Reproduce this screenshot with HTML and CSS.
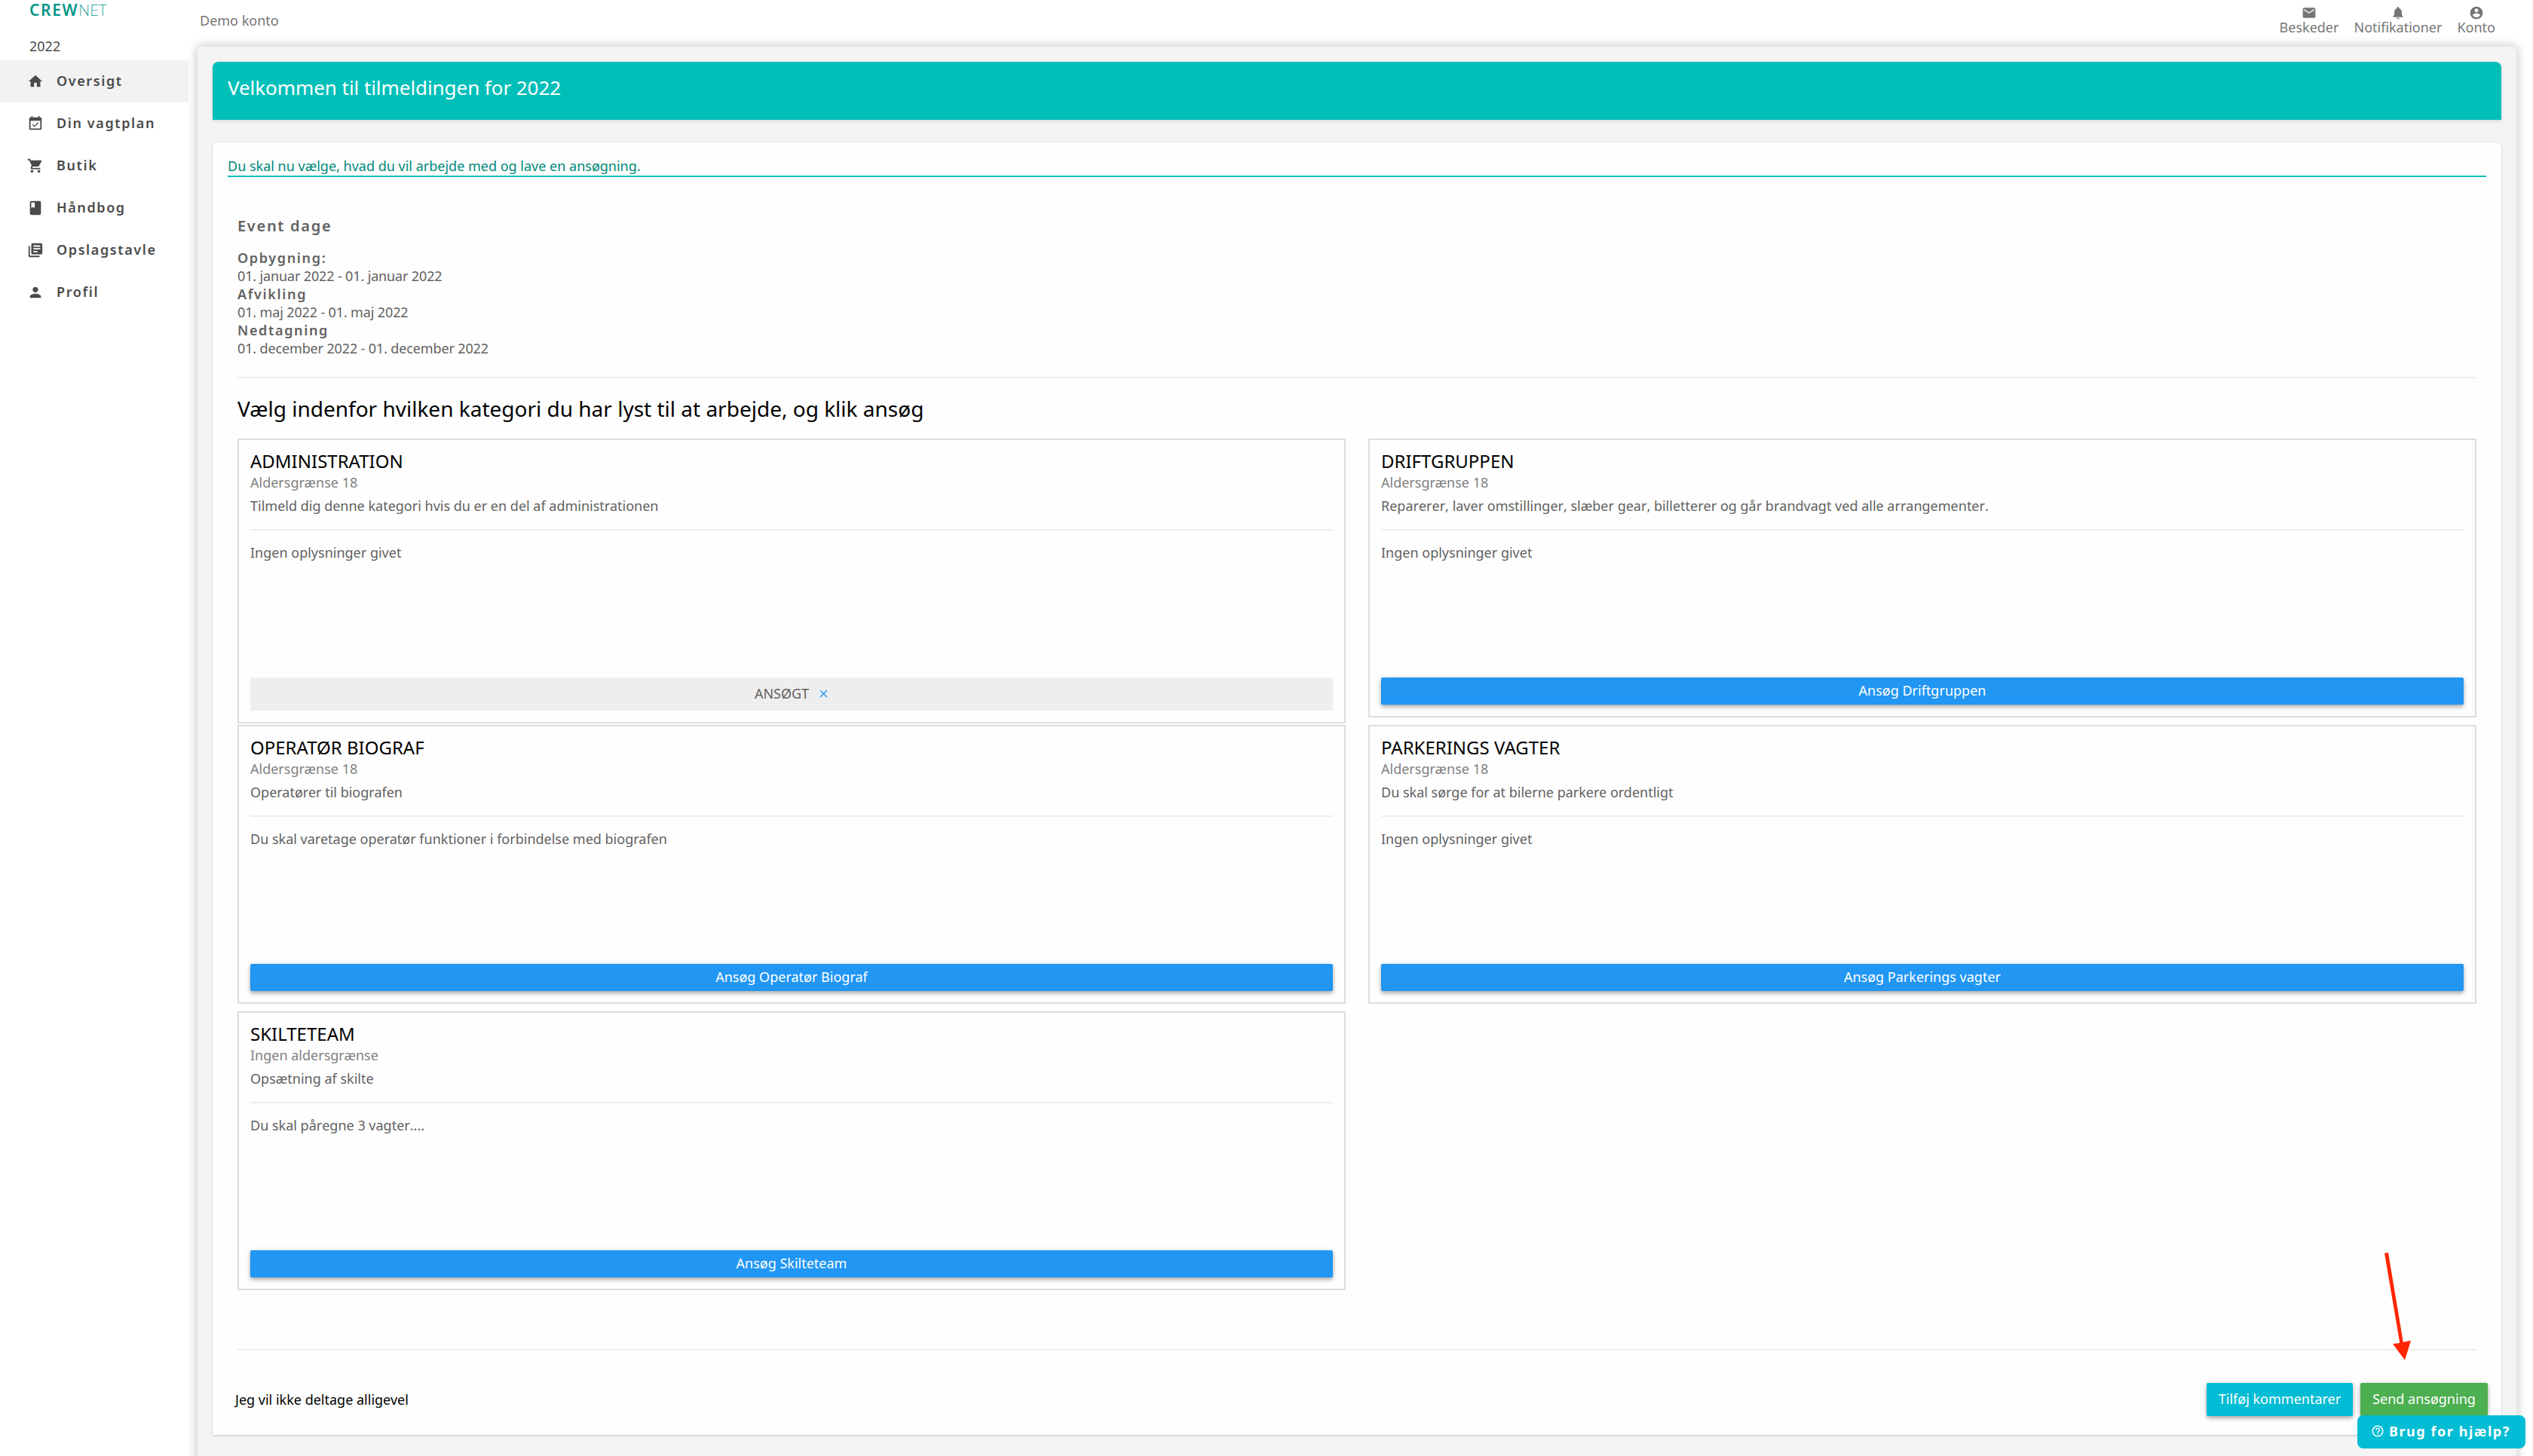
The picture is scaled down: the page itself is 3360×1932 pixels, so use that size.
FILE: index.html
```
<!DOCTYPE html>
<html lang="da">
    <head>
        <meta charset="utf-8">
        <title>CrewNet - Oversigt</title>
        <link rel="stylesheet" href="styles.css">
    </head>
    <body>
        <aside class="sidebar">
            <div class="logo"><b>CREW</b>NET</div>
            <div class="year">2022</div>
            <nav>
                <a class="nav-item active"><svg viewBox="0 0 24 24"><path d="M10 20v-6h4v6h5v-8h3L12 3 2 12h3v8z"/></svg>Oversigt</a>
                <a class="nav-item"><svg viewBox="0 0 24 24"><path d="M16.53 11.06L15.47 10l-4.88 4.88-2.12-2.12-1.06 1.06L10.59 17l5.94-5.94zM19 3h-1V1h-2v2H8V1H6v2H5c-1.11 0-1.99.9-1.99 2L3 19c0 1.1.89 2 2 2h14c1.1 0 2-.9 2-2V5c0-1.1-.9-2-2-2zm0 16H5V8h14v11z"/></svg>Din vagtplan</a>
                <a class="nav-item"><svg viewBox="0 0 24 24"><path d="M7 18c-1.1 0-1.99.9-1.99 2S5.9 22 7 22s2-.9 2-2-.9-2-2-2zM1 2v2h2l3.6 7.59-1.35 2.45c-.16.28-.25.61-.25.96 0 1.1.9 2 2 2h12v-2H7.42c-.14 0-.25-.11-.25-.25l.03-.12.9-1.63h7.45c.75 0 1.41-.41 1.75-1.03l3.58-6.49c.08-.14.12-.31.12-.48 0-.55-.45-1-1-1H5.21l-.94-2H1zm16 16c-1.1 0-1.99.9-1.99 2s.89 2 1.99 2 2-.9 2-2-.9-2-2-2z"/></svg>Butik</a>
                <a class="nav-item"><svg viewBox="0 0 24 24"><path d="M18 2H6c-1.1 0-2 .9-2 2v16c0 1.1.9 2 2 2h12c1.1 0 2-.9 2-2V4c0-1.1-.9-2-2-2zM6 4h5v8l-2.5-1.5L6 12V4z"/></svg>Håndbog</a>
                <a class="nav-item"><svg viewBox="0 0 24 24"><path d="M4 6H2v14c0 1.1.9 2 2 2h14v-2H4V6zm16-4H8c-1.1 0-2 .9-2 2v12c0 1.1.9 2 2 2h12c1.1 0 2-.9 2-2V4c0-1.1-.9-2-2-2zm-1 9H9V9h10v2zm-4 4H9v-2h6v2zm4-8H9V5h10v2z"/></svg>Opslagstavle</a>
                <a class="nav-item"><svg viewBox="0 0 24 24"><path d="M12 12c2.21 0 4-1.79 4-4s-1.79-4-4-4-4 1.79-4 4 1.79 4 4 4zm0 2c-2.67 0-8 1.34-8 4v2h16v-2c0-2.66-5.33-4-8-4z"/></svg>Profil</a>
            </nav>
        </aside>

        <div class="page">
            <header class="topbar">
                <span class="account">Demo konto</span>
                <div class="top-links">
                    <a><svg viewBox="0 0 24 24"><path d="M20 4H4c-1.1 0-1.99.9-1.99 2L2 18c0 1.1.9 2 2 2h16c1.1 0 2-.9 2-2V6c0-1.1-.9-2-2-2zm0 4l-8 5-8-5V6l8 5 8-5v2z"/></svg>Beskeder</a>
                    <a><svg viewBox="0 0 24 24"><path d="M12 22c1.1 0 2-.9 2-2h-4c0 1.1.89 2 2 2zm6-6v-5c0-3.07-1.64-5.64-4.5-6.32V4c0-.83-.67-1.5-1.5-1.5s-1.5.67-1.5 1.5v.68C7.63 5.36 6 7.92 6 11v5l-2 2v1h16v-1l-2-2z"/></svg>Notifikationer</a>
                    <a><svg viewBox="0 0 24 24"><path d="M12 2C6.48 2 2 6.48 2 12s4.48 10 10 10 10-4.48 10-10S17.52 2 12 2zm0 3c1.66 0 3 1.34 3 3s-1.34 3-3 3-3-1.34-3-3 1.34-3 3-3zm0 14.2c-2.5 0-4.71-1.28-6-3.22.03-1.99 4-3.08 6-3.08 1.99 0 5.97 1.09 6 3.08-1.29 1.94-3.5 3.22-6 3.22z"/></svg>Konto</a>
                </div>
            </header>

            <main class="panel">
                <h1 class="banner">Velkommen til tilmeldingen for 2022</h1>

                <section class="content">
                    <p class="intro">Du skal nu vælge, hvad du vil arbejde med og lave en ansøgning.</p>

                    <div class="inner">
                        <h3>Event dage</h3>
                        <div class="dates">
                            <b>Opbygning:</b>
                            <span>01. januar 2022 - 01. januar 2022</span>
                            <b>Afvikling</b>
                            <span>01. maj 2022 - 01. maj 2022</span>
                            <b>Nedtagning</b>
                            <span>01. december 2022 - 01. december 2022</span>
                        </div>
                        <hr>
                        <h2>Vælg indenfor hvilken kategori du har lyst til at arbejde, og klik ansøg</h2>

                        <div class="categories">
                            <div class="category">
                                <h4>ADMINISTRATION</h4>
                                <p class="age">Aldersgrænse 18</p>
                                <p class="desc">Tilmeld dig denne kategori hvis du er en del af administrationen</p>
                                <hr>
                                <p class="info">Ingen oplysninger givet</p>
                                <div class="applied">ANSØGT <svg viewBox="0 0 24 24"><path d="M19 6.41L17.59 5 12 10.59 6.41 5 5 6.41 10.59 12 5 17.59 6.41 19 12 13.41 17.59 19 19 17.59 13.41 12z"/></svg></div>
                            </div>
                            <div class="category">
                                <h4>DRIFTGRUPPEN</h4>
                                <p class="age">Aldersgrænse 18</p>
                                <p class="desc unkerned">Reparerer, laver omstillinger, slæber gear, billetterer og går brandvagt ved alle arrangementer.</p>
                                <hr>
                                <p class="info">Ingen oplysninger givet</p>
                                <button class="apply">Ansøg Driftgruppen</button>
                            </div>
                            <div class="category">
                                <h4>OPERATØR BIOGRAF</h4>
                                <p class="age">Aldersgrænse 18</p>
                                <p class="desc">Operatører til biografen</p>
                                <hr>
                                <p class="info">Du skal varetage operatør funktioner i forbindelse med biografen</p>
                                <button class="apply">Ansøg Operatør Biograf</button>
                            </div>
                            <div class="category">
                                <h4>PARKERINGS VAGTER</h4>
                                <p class="age">Aldersgrænse 18</p>
                                <p class="desc">Du skal sørge for at bilerne parkere ordentligt</p>
                                <hr>
                                <p class="info">Ingen oplysninger givet</p>
                                <button class="apply">Ansøg Parkerings vagter</button>
                            </div>
                            <div class="category">
                                <h4>SKILTETEAM</h4>
                                <p class="age">Ingen aldersgrænse</p>
                                <p class="desc">Opsætning af skilte</p>
                                <hr>
                                <p class="info unkerned">Du skal påregne 3 vagter....</p>
                                <button class="apply">Ansøg Skilteteam</button>
                            </div>
                        </div>
                        <hr>
                    </div>

                    <footer class="actions">
                        <a class="decline">Jeg vil ikke deltage alligevel</a>
                        <button class="btn comment">Tilføj kommentarer</button>
                        <button class="btn send">Send ansøgning</button>
                    </footer>
                </section>
            </main>
        </div>

        <!-- arrow pointing at the send button -->
        <svg class="arrow" viewBox="0 0 50 146"><path d="M13 2.8l5-.6L37.8 121l10.2-2.3-8 26-16-21.4 9.3-1.3z"/></svg>

        <a class="help"><svg viewBox="0 0 24 24"><path d="M11 18h2v-2h-2v2zm1-16C6.48 2 2 6.48 2 12s4.48 10 10 10 10-4.48 10-10S17.52 2 12 2zm0 18c-4.41 0-8-3.59-8-8s3.59-8 8-8 8 3.59 8 8-3.59 8-8 8zm0-14c-2.21 0-4 1.79-4 4h2c0-1.1.9-2 2-2s2 .9 2 2c0 2-3 1.75-3 5h2c0-2.25 3-2.5 3-5 0-2.21-1.79-4-4-4z"/></svg>Brug for hjælp?</a>
    </body>
</html>
```
FILE: styles.css
```
* {
    box-sizing: border-box;
}

body {
    margin: 0;
    display: flex;
    height: 1932px;
    overflow: hidden;
    background-color: #fff;
    color: #616161;
    font-family: "Noto Sans", sans-serif;
    font-size: 18px;
    line-height: 24px;
}

h1, h2, h3, h4, p {
    margin: 0;
    font-weight: 400;
}

hr {
    height: 2px;
    margin: 0;
    border: none;
    background-color: #eee;
}

svg {
    fill: currentColor;
}

b {
    font-weight: 600;
    letter-spacing: 1.65px;
}

/* sidebar */
.sidebar {
    width: 250px;
    color: #4a4a4a;
}

.logo {
    padding: 0 39px;
    height: 27px;
    line-height: 26px;
    font-size: 21px;
    font-weight: 200;
    color: #009688;
}

.logo b {
    letter-spacing: 1.65px;
}

.year {
    padding: 22px 39px 0;
    height: 53px;
}

.nav-item {
    display: flex;
    align-items: center;
    height: 56px;
    padding: 0 0 2px 36px;
    gap: 17px;
    font-weight: 600;
    letter-spacing: 1.6px;
}

.nav-item svg {
    width: 22px;
    height: 22px;
    margin-top: 2px;
}

.active {
    background-color: #f2f2f2;
}

/* right side */
.page {
    flex: 1;
    padding: 0 22px 0 12px;
}

.topbar {
    display: flex;
    justify-content: space-between;
    height: 62px;
    padding: 0 28px 0 3px;
    color: #757575;
}

.account {
    padding-top: 15px;
}

.top-links {
    display: flex;
    gap: 20px;
    padding-top: 7px;
}

.top-links a {
    display: flex;
    flex-direction: column;
    align-items: center;
    line-height: 18px;
}

.top-links svg {
    width: 20px;
    height: 20px;
}

.panel {
    height: 1900px;
    padding: 20px;
    border-radius: 6px;
    background-color: #f4f4f4;
    box-shadow: 0 0 12px 3px rgba(0, 0, 0, 0.18);
}

.banner {
    height: 77px;
    padding: 16px 20px;
    margin-bottom: 30px;
    border-radius: 8px 8px 0 0;
    background-color: #00bfb9;
    box-shadow: 0 2px 4px rgba(0, 0, 0, 0.12);
    color: #fff;
    font-size: 26px;
    line-height: 36px;
    letter-spacing: -0.06px;
}

.content {
    height: 1715px;
    border-radius: 8px 8px 0 0;
    background-color: #fefefe;
    box-shadow: 0 1px 3px rgba(0, 0, 0, 0.2);
}

.intro {
    height: 46px;
    margin: 0 20px;
    padding-top: 19px;
    border-bottom: 2px solid #00bfb9;
    color: #00897b;
}

.inner {
    padding: 51px 33px 0;
}

.inner h3 {
    height: 44px;
    line-height: 27px;
    font-size: 20px;
    font-weight: 600;
    letter-spacing: 1.7px;
}

.dates {
    display: flex;
    flex-direction: column;
    margin-bottom: 26px;
}

.dates span {
    letter-spacing: -0.14px;
}

.inner h2 {
    height: 80px;
    padding-top: 20px;
    color: #000;
    font-size: 28px;
    line-height: 40px;
}

.categories {
    display: grid;
    grid-template-columns: 1fr 1fr;
    grid-auto-rows: 370px;
    gap: 10px 30px;
    align-items: start;
    margin-bottom: 78px;
}

.category {
    padding: 12px 15px 15px;
    border: 2px solid #ddd;
}

.category h4 {
    height: 34px;
    color: #000;
    font-size: 24px;
    line-height: 32px;
}

.age {
    height: 31px;
    line-height: 20px;
    color: #808080;
}

.desc {
    height: 41px;
    line-height: 20px;
}

.info {
    padding-top: 17px;
    height: 195px;
}

.unkerned {
    font-kerning: none;
}

.applied {
    display: flex;
    justify-content: center;
    align-items: center;
    gap: 11px;
    height: 44px;
    padding: 0 0 2px 2px;
    background-color: #eee;
}

.applied svg {
    width: 17px;
    height: 17px;
    color: #2196f3;
}

button {
    padding: 0 0 2px;
    border: none;
    border-radius: 2px;
    color: #fff;
    font: inherit;
    box-shadow: 0 4px 5px rgba(0, 0, 0, 0.14), 0 1px 10px rgba(0, 0, 0, 0.12), 0 2px 4px rgba(0, 0, 0, 0.14);
}

.apply {
    display: block;
    width: 100%;
    height: 36px;
    background-color: #2196f3;
}

/* bottom row */
.actions {
    display: flex;
    align-items: center;
    gap: 10px;
    padding: 43px 18px 0 30px;
}

.decline {
    flex: 1;
    color: #000;
}

.btn {
    height: 44px;
}

.comment {
    width: 194px;
    background-color: #00bcd4;
}

.send {
    width: 169px;
    background-color: #4caf50;
}

.arrow {
    position: absolute;
    left: 3150px;
    top: 1660px;
    width: 50px;
    height: 146px;
    fill: #ff2600;
}

.help {
    position: fixed;
    right: 10px;
    bottom: 10px;
    display: flex;
    align-items: center;
    gap: 6px;
    width: 223px;
    height: 44px;
    padding: 0 0 2px 18px;
    border-radius: 8px;
    background-color: #00bcd4;
    color: #fff;
    font-weight: 700;
    letter-spacing: 1.55px;
    white-space: nowrap;
}

.help svg {
    width: 18px;
    height: 18px;
}
```
